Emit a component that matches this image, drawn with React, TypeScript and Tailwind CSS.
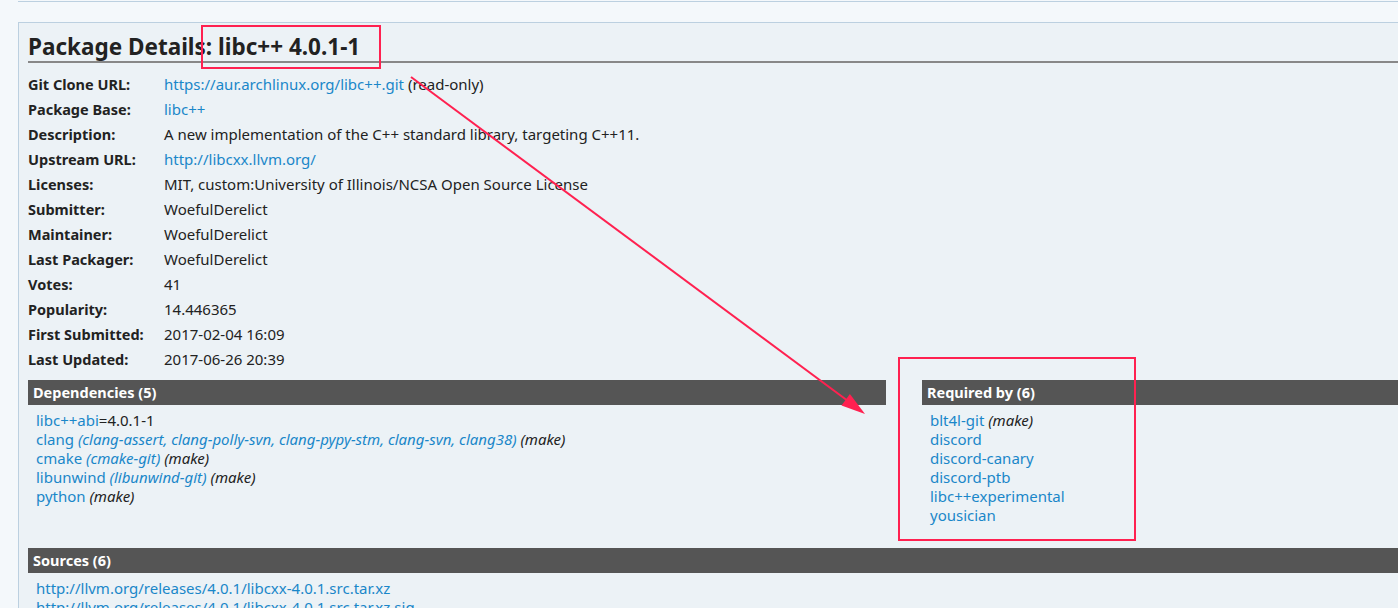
import type { ReactNode } from 'react'

const FONT = { fontFamily: '"Noto Sans", "Open Sans", sans-serif' }

const DETAILS: { label: string; value: ReactNode }[] = [
  {
    label: 'Git Clone URL:',
    value: (
      <>
        <a className="text-[#1a87c9]">https://aur.archlinux.org/libc++.git</a> (read-only)
      </>
    ),
  },
  { label: 'Package Base:', value: <a className="text-[#1a87c9]">libc++</a> },
  { label: 'Description:', value: 'A new implementation of the C++ standard library, targeting C++11.' },
  { label: 'Upstream URL:', value: <a className="text-[#1a87c9]">http://libcxx.llvm.org/</a> },
  { label: 'Licenses:', value: 'MIT, custom:University of Illinois/NCSA Open Source License' },
  { label: 'Submitter:', value: 'WoefulDerelict' },
  { label: 'Maintainer:', value: 'WoefulDerelict' },
  { label: 'Last Packager:', value: 'WoefulDerelict' },
  { label: 'Votes:', value: '41' },
  { label: 'Popularity:', value: '14.446365' },
  { label: 'First Submitted:', value: '2017-02-04 16:09' },
  { label: 'Last Updated:', value: '2017-06-26 20:39' },
]

const Link = ({ children }: { children: ReactNode }) => <a className="text-[#1a87c9]">{children}</a>
const Make = () => <em className="text-[#222]">(make)</em>

function Bar({ children }: { children: ReactNode }) {
  return (
    <h3 className="h-[25px] bg-[#555555] pl-[5px] text-[14.5px] font-bold leading-[25px] text-white">{children}</h3>
  )
}

export default function App() {
  return (
    <div className="relative h-[608px] w-[1398px] overflow-hidden bg-[#f4f8fb] text-[#222]" style={FONT}>
      <div className="ml-[18px] h-[2px] w-[1800px] border-b border-[#bcd0e0]" />
      <div className="ml-[18px] mt-[20px] w-[1800px] border border-[#bcd0e0] bg-[#ecf2f6] px-[9px]">
        <h2 className="border-b-2 border-[#888] pt-[9px] text-[22.5px] font-bold leading-[29px]">
          Package Details: libc++ 4.0.1-1
        </h2>

        <table className="mt-[9px] text-[15px] leading-[25px]">
          <tbody>
            {DETAILS.map(row => (
              <tr key={row.label}>
                <th className="w-[136px] p-0 text-left align-top text-[14.5px] font-bold">{row.label}</th>
                <td className="p-0">{row.value}</td>
              </tr>
            ))}
          </tbody>
        </table>

        <div className="mt-[8px] flex gap-[36px]">
          <div className="w-[858px]">
            <Bar>Dependencies (5)</Bar>
            <ul className="pl-[8px] pt-[6px] text-[15px] leading-[19px]">
              <li>
                <Link>libc++abi</Link>=4.0.1-1
              </li>
              <li>
                <Link>clang</Link>{' '}
                <em className="text-[#1a87c9]">
                  (clang-assert, clang-polly-svn, clang-pypy-stm, clang-svn, clang38)
                </em>{' '}
                <Make />
              </li>
              <li>
                <Link>cmake</Link> <em className="text-[#1a87c9]">(cmake-git)</em> <Make />
              </li>
              <li>
                <Link>libunwind</Link> <em className="text-[#1a87c9]">(libunwind-git)</em> <Make />
              </li>
              <li>
                <Link>python</Link> <Make />
              </li>
            </ul>
          </div>
          <div className="w-[858px]">
            <Bar>Required by (6)</Bar>
            <ul className="pl-[8px] pt-[6px] text-[15px] leading-[19px]">
              <li>
                <Link>blt4l-git</Link> <Make />
              </li>
              {['discord', 'discord-canary', 'discord-ptb', 'libc++experimental', 'yousician'].map(n => (
                <li key={n}>
                  <Link>{n}</Link>
                </li>
              ))}
            </ul>
          </div>
        </div>

        <div className="mt-[23px]">
          <Bar>Sources (6)</Bar>
          <ul className="pl-[8px] pt-[6px] text-[15px] leading-[19px]">
            <li>
              <Link>http://llvm.org/releases/4.0.1/libcxx-4.0.1.src.tar.xz</Link>
            </li>
            <li>
              <Link>http://llvm.org/releases/4.0.1/libcxx-4.0.1.src.tar.xz.sig</Link>
            </li>
          </ul>
        </div>
      </div>

      {/* red annotation marks drawn over the page */}
      <svg className="pointer-events-none absolute left-0 top-0" width="1398" height="608">
        <rect x="202" y="26" width="178" height="42" fill="none" stroke="#ff2150" strokeWidth="2" />
        <rect x="899" y="358" width="236" height="182" fill="none" stroke="#ff2150" strokeWidth="2" />
        <line x1="411" y1="77" x2="848" y2="401" stroke="#ff2150" strokeWidth="2" />
        <polygon points="865,414 841.5,405.6 849.9,394.1" fill="#ff2150" />
      </svg>
    </div>
  )
}
